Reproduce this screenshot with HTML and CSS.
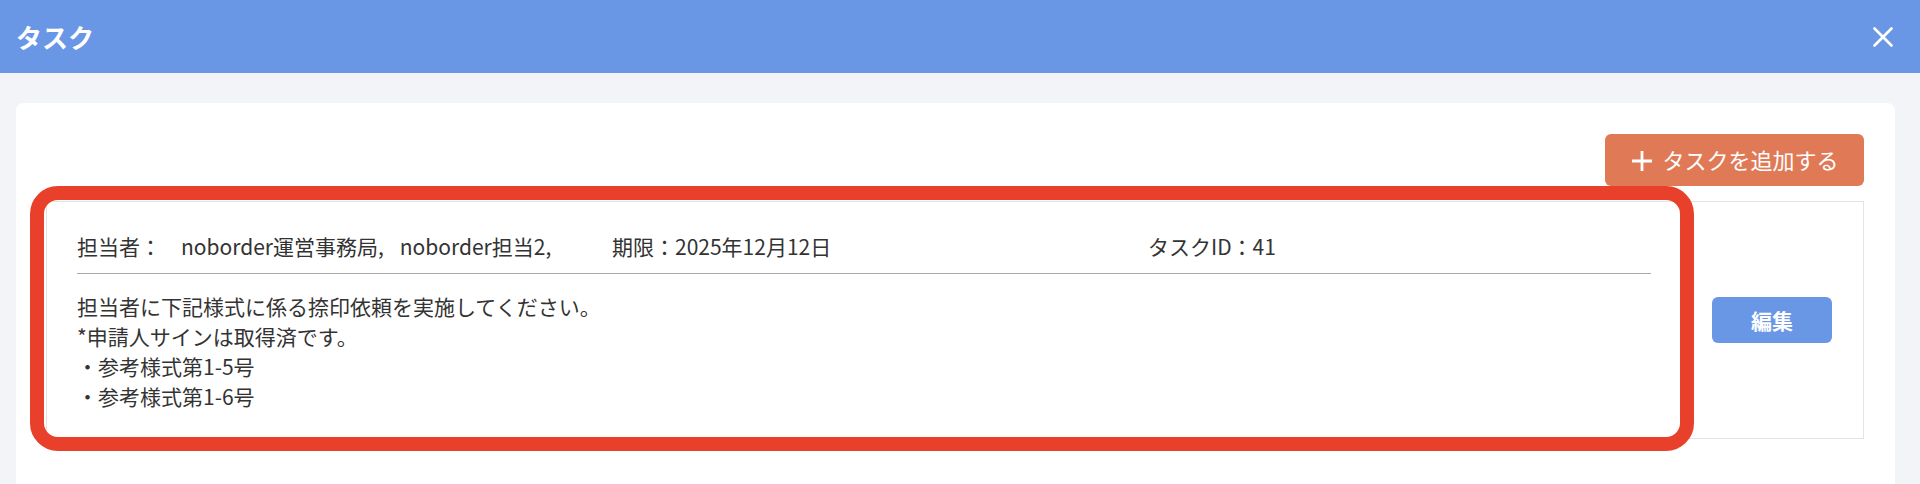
FILE: index.html
```html
<!DOCTYPE html>
<html lang="ja">
<head>
<meta charset="utf-8">
<title>タスク</title>
<link rel="stylesheet" href="styles.css">
</head>
<body>
<header class="modal-header">
  <h1 class="modal-title">タスク</h1>
  <button class="close-btn" aria-label="閉じる">
    <svg width="20" height="20" viewBox="0 0 20 20"><path d="M1.5 1.5 L18.5 18.5 M18.5 1.5 L1.5 18.5" stroke="#fff" stroke-width="2.6" stroke-linecap="round" fill="none"/></svg>
  </button>
</header>
<main class="modal-body">
  <section class="card">
    <div class="toolbar">
      <button class="add-btn">
        <svg class="plus" width="24" height="24" viewBox="0 0 24 24"><path d="M12 2 V22 M2 12 H22" stroke="#fff" stroke-width="2.8" fill="none"/></svg>
        <span>タスクを追加する</span>
      </button>
    </div>
    <div class="task">
      <div class="task-main">
        <div class="meta">
          <div class="assignees"><span class="label">担当者：</span><span class="name">noborder運営事務局,</span><span class="name">noborder担当2,</span></div>
          <div class="deadline">期限：2025年12月12日</div>
          <div class="taskid">タスクID：41</div>
        </div>
        <div class="desc">担当者に下記様式に係る捺印依頼を実施してください。<br>*申請人サインは取得済です。<br>・参考様式第1-5号<br>・参考様式第1-6号</div>
      </div>
      <div class="task-actions">
        <button class="edit-btn">編集</button>
      </div>
      <div class="highlight"></div>
    </div>
  </section>
</main>
</body>
</html>
```
FILE: styles.css
```css
* { box-sizing: border-box; }
html, body { margin: 0; padding: 0; }
body {
  background: #f3f4f8;
  font-family: "Noto Sans CJK JP", "Noto Sans", sans-serif;
  color: #333;
  height: 484px;
  overflow: hidden;
}
button { font-family: inherit; border: none; cursor: pointer; }

.modal-header {
  height: 73px;
  background: #6a96e6;
  display: flex;
  align-items: center;
  justify-content: space-between;
  padding: 0 27px 0 16px;
}
.modal-title {
  margin: 0;
  color: #fff;
  font-size: 26px;
  font-weight: 700;
  line-height: 1;
}
.close-btn {
  background: transparent;
  padding: 0;
  width: 20px;
  height: 20px;
  display: flex;
}

.modal-body {
  padding: 30px 25px 0 16px;
}
.card {
  background: #fff;
  border-radius: 8px;
  padding: 31px 31px 60px 30px;
  min-height: 420px;
}
.toolbar {
  display: flex;
  justify-content: flex-end;
}
.add-btn {
  width: 259px;
  height: 52px;
  background: #e07956;
  color: #fff;
  border-radius: 6px;
  font-size: 22px;
  display: flex;
  align-items: center;
  justify-content: center;
  gap: 8px;
  padding: 0 0 2px 0;
}
.add-btn .plus { flex: none; margin-top: 3px; }

.task {
  position: relative;
  margin-top: 15px;
  border: 1px solid #e4e4e4;
  display: flex;
  height: 238px;
}
.task-main {
  flex: 1;
  padding: 29px 29px 0 30px;
  font-size: 21px;
  line-height: 30px;
}
.meta {
  display: grid;
  grid-template-columns: 535px 536px 1fr;
  padding-bottom: 12px;
  border-bottom: 1px solid #aaa;
  white-space: nowrap;
}
.label { margin-right: 20px; }
.name { margin-right: 16px; }
.desc {
  padding-top: 17px;
}
.task-actions {
  flex: none;
  width: 183px;
  display: flex;
  align-items: center;
  justify-content: center;
}
.edit-btn {
  width: 120px;
  height: 46px;
  background: #6a96e6;
  color: #fff;
  border-radius: 6px;
  font-size: 21px;
  font-weight: 700;
  margin-left: 1px;
}
.highlight {
  position: absolute;
  left: -17px;
  top: -16px;
  width: 1664px;
  height: 265px;
  border: 14px solid #e8402a;
  border-radius: 28px;
  pointer-events: none;
}
```
